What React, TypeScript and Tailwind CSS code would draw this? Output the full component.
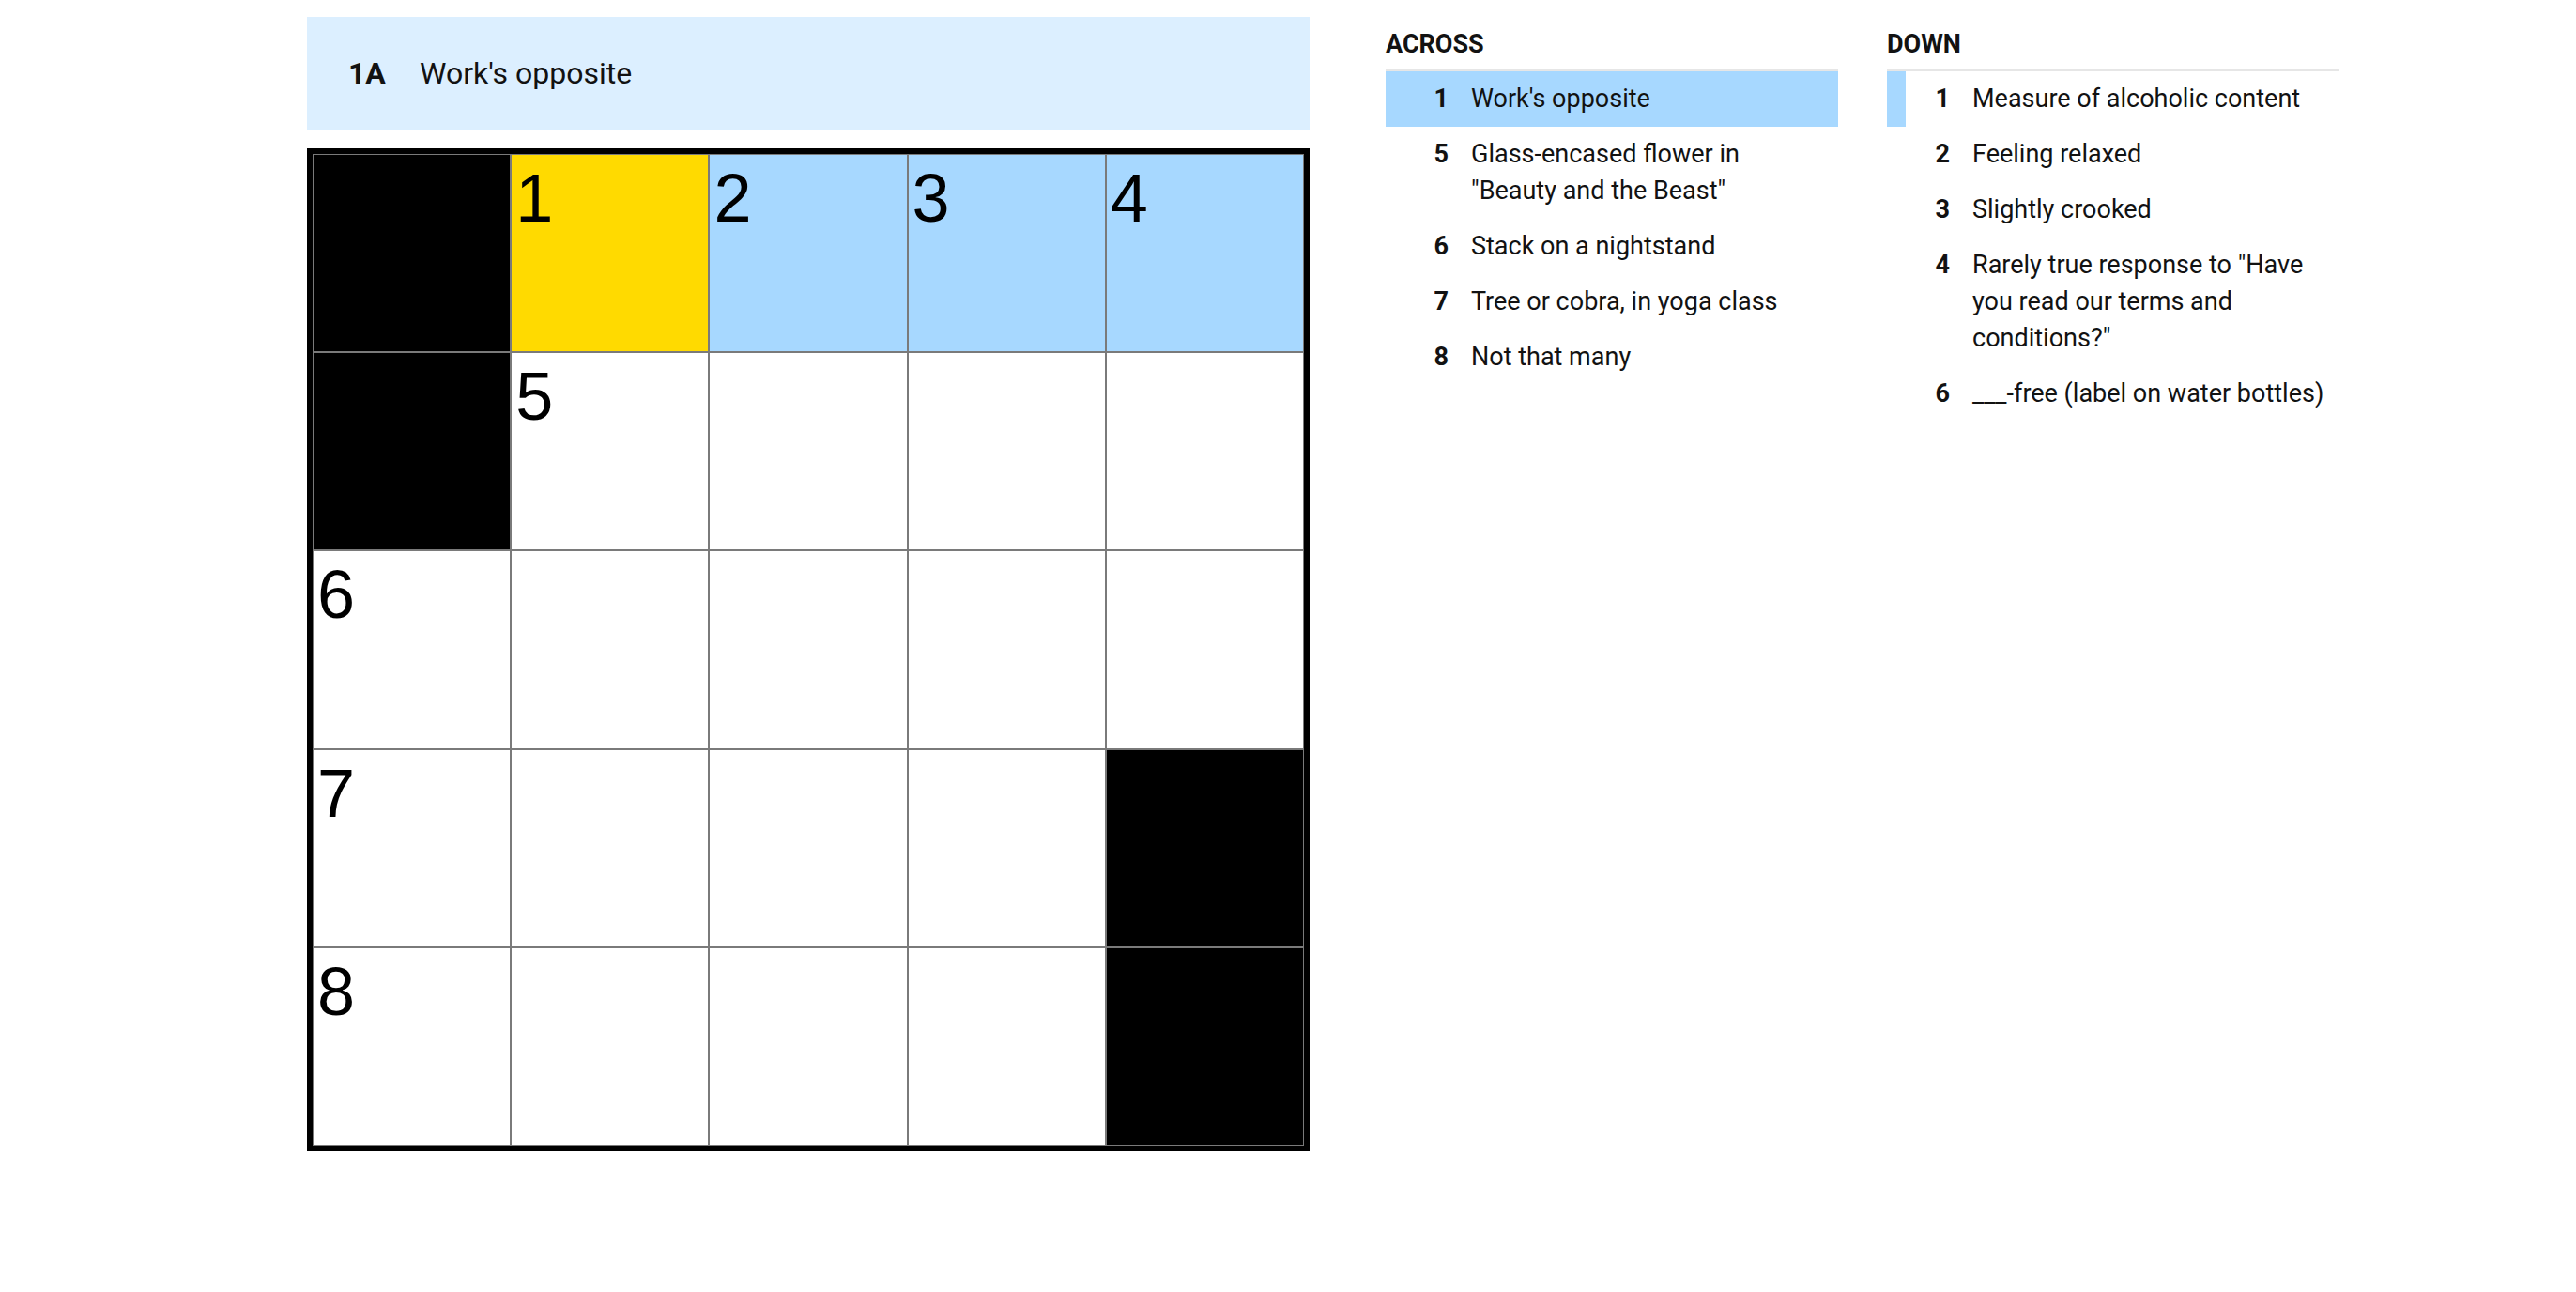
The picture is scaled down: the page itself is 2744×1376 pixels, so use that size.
import React from "react";

type Cell = { black?: boolean; num?: number; tone?: "focus" | "word" };

const GRID: Cell[][] = [
  [{ black: true }, { num: 1, tone: "focus" }, { num: 2, tone: "word" }, { num: 3, tone: "word" }, { num: 4, tone: "word" }],
  [{ black: true }, { num: 5 }, {}, {}, {}],
  [{ num: 6 }, {}, {}, {}, {}],
  [{ num: 7 }, {}, {}, {}, { black: true }],
  [{ num: 8 }, {}, {}, {}, { black: true }],
];

type Clue = { num: number; text: string };

const ACROSS: Clue[] = [
  { num: 1, text: "Work's opposite" },
  { num: 5, text: 'Glass-encased flower in "Beauty and the Beast"' },
  { num: 6, text: "Stack on a nightstand" },
  { num: 7, text: "Tree or cobra, in yoga class" },
  { num: 8, text: "Not that many" },
];

const DOWN: Clue[] = [
  { num: 1, text: "Measure of alcoholic content" },
  { num: 2, text: "Feeling relaxed" },
  { num: 3, text: "Slightly crooked" },
  { num: 4, text: 'Rarely true response to "Have you read our terms and conditions?"' },
  { num: 6, text: "___-free (label on water bottles)" },
];

function Square({ cell }: { cell: Cell }) {
  if (cell.black) return <div className="bg-black" />;
  const bg =
    cell.tone === "focus" ? "bg-[#ffda00]" : cell.tone === "word" ? "bg-[#a7d8ff]" : "bg-white";
  return (
    <div className={`${bg} pl-[4px] pt-[10px] text-[72px] leading-none text-black`}>
      {cell.num}
    </div>
  );
}

function ClueList({
  title,
  clues,
  active,
  crossing,
}: {
  title: string;
  clues: Clue[];
  active?: number;
  crossing?: number;
}) {
  return (
    <section className="w-[482px] pt-[31px]">
      <h3 className="border-b-2 border-[#e6e6e6] pb-[11px] text-[27px] font-bold leading-[32px] text-[#121212]">
        {title}
      </h3>
      <ol>
        {clues.map((c) => {
          const isActive = c.num === active;
          const isCross = c.num === crossing;
          return (
            <li
              key={c.num}
              className={`flex items-start py-[10px] pr-[13px] text-[27px] leading-[39px] text-[#121212] ${
                isActive ? "bg-[#a7d8ff]" : ""
              }`}
            >
              <span
                className={`-my-[10px] w-[20px] shrink-0 self-stretch ${isCross ? "bg-[#a7d8ff]" : ""}`}
              />
              <span className="w-[47px] shrink-0 text-right font-bold">{c.num}</span>
              <span className="ml-[24px]">{c.text}</span>
            </li>
          );
        })}
      </ol>
    </section>
  );
}

export default function App() {
  return (
    <div className="flex min-h-screen bg-white pl-[327px] font-[family-name:Roboto,sans-serif]">
      <div className="w-[1068px] pt-[18px]">
        <div className="flex h-[120px] items-center bg-[#dcefff] pl-[44px] text-[32px] text-[#121212]">
          <span className="w-[76px] font-bold">1A</span>
          <span>Work's opposite</span>
        </div>

        <div className="mt-[20px] grid h-[1068px] w-[1068px] grid-cols-5 grid-rows-5 gap-[2px] border-[6px] border-black bg-[#7a7a7a] p-[1px] font-[family-name:'Liberation_Sans',Arial,sans-serif]">
          {GRID.flat().map((cell, i) => (
            <Square key={i} cell={cell} />
          ))}
        </div>
      </div>

      <div className="ml-[81px] flex gap-[52px]">
        <ClueList title="ACROSS" clues={ACROSS} active={1} />
        <ClueList title="DOWN" clues={DOWN} crossing={1} />
      </div>
    </div>
  );
}
